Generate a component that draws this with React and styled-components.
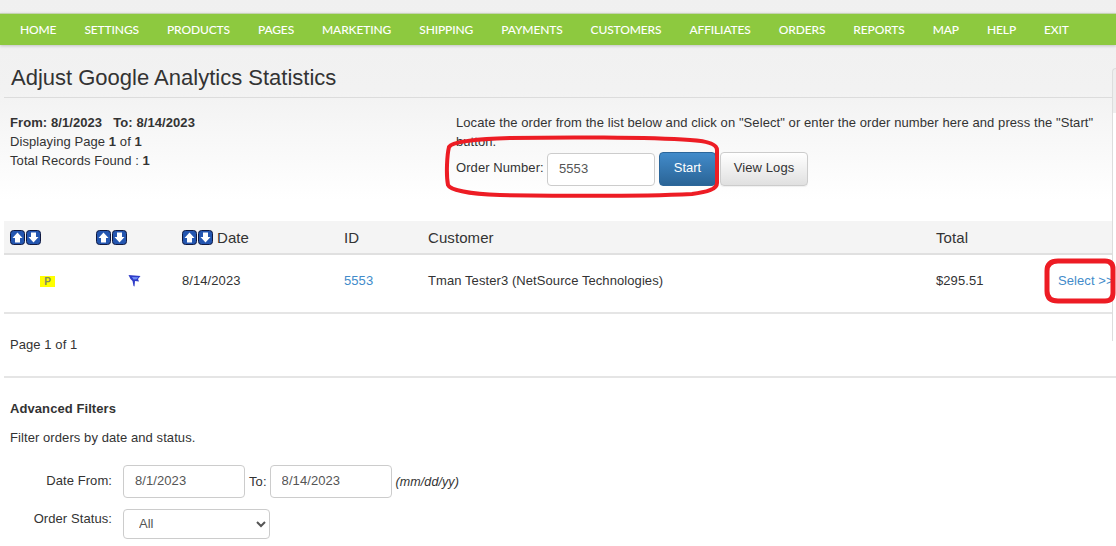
import React from "react";
import styled, { createGlobalStyle } from "styled-components";

const Global = createGlobalStyle`
  html, body { margin: 0; padding: 0; background: #fff; overflow: hidden; }
  body { font-family: "Liberation Sans", Arial, sans-serif; font-size: 13px; letter-spacing: 0.08px; color: #333; }
`;

const Page = styled.div`
  position: relative;
  width: 1116px;
  height: 546px;
  overflow: hidden;
  padding-top: 13px;
  box-sizing: border-box;
  background: linear-gradient(#f0f0f0 0, #f2f2f2 90px, #ffffff 200px);
`;

const Nav = styled.nav`
  display: flex;
  height: 32px;
  box-sizing: border-box;
  align-items: center;
  padding-left: 6px;
  background: #8dc93f;
  border-top: 1px solid #c5d3b2;
  box-shadow: 0 1px 3px rgba(0, 0, 0, 0.2);
`;

const NavItem = styled.a`
  padding: 0 14px;
  color: #fff;
  font-family: "Lato", sans-serif;
  font-size: 12px;
  letter-spacing: -0.13px;
  font-weight: 500;
  white-space: nowrap;
`;

const Title = styled.h1`
  margin: 20px 0 0 4px;
  padding: 0 0 6px 7px;
  font-size: 22px;
  line-height: 26px;
  font-weight: 400;
  letter-spacing: 0;
  color: #333;
  border-bottom: 1px solid #dcdcdc;
`;

const Summary = styled.section`
  display: flex;
  height: 123px;
  padding: 15px 0 0 10px;
  box-sizing: border-box;
`;

const Stats = styled.div`
  width: 446px;
  line-height: 19px;
`;

const Strong = styled.b`
  font-weight: 700;
`;

const Locate = styled.div`
  width: 640px;
  line-height: 19px;
`;

const OrderRow = styled.div`
  display: flex;
  align-items: center;
  gap: 4px;
  margin-top: 1px;
`;

const FieldLabel = styled.label`
  width: 88px;
  margin: 0 -1px 3px 0;
  white-space: nowrap;
`;

const TextInput = styled.input`
  width: ${(p) => p.$w}px;
  height: ${(p) => p.$h}px;
  box-sizing: border-box;
  padding: 0 11px 2px;
  font: 13px "Liberation Sans", Arial, sans-serif;
  letter-spacing: 0.08px;
  color: #555;
  background: #fff;
  border: 1px solid #ccc;
  border-radius: 4px;
  outline: none;
`;

const PrimaryButton = styled.button`
  width: 57px;
  height: 34px;
  padding: 0 0 3px;
  font: 13px "Liberation Sans", Arial, sans-serif;
  color: #fff;
  background: linear-gradient(#428bca, #2a6496);
  border: 1px solid #2b669a;
  border-radius: 4px;
`;

const DefaultButton = styled.button`
  width: 88px;
  height: 34px;
  padding: 0 0 3px;
  font: 13px "Liberation Sans", Arial, sans-serif;
  letter-spacing: 0.1px;
  color: #333;
  background: linear-gradient(#fff, #e0e0e0);
  border: 1px solid #ccc;
  border-radius: 4px;
  box-shadow: 0 1px 1px rgba(0, 0, 0, 0.06);
`;

const Columns = `86px 86px 162px 84px 508px 122px 1fr`;

const HeadRow = styled.div`
  display: grid;
  grid-template-columns: ${Columns};
  align-items: center;
  height: 34px;
  margin-left: 4px;
  padding-left: 6px;
  box-sizing: border-box;
  background: #f4f4f4;
  border-bottom: 2px solid #e0e0e0;
  font-size: 15px;
`;

const HeadCell = styled.div`
  display: flex;
  align-items: center;
  gap: ${(p) => p.$gap ?? 4}px;
`;

const BodyRow = styled.div`
  display: grid;
  grid-template-columns: ${Columns};
  align-items: center;
  height: 59px;
  margin-left: 4px;
  padding: 0 0 6px 6px;
  box-sizing: border-box;
  border-bottom: 2px solid #e5e5e5;
`;

const Badge = styled.span`
  display: block;
  width: 15px;
  height: 11px;
  margin: 2px 0 0 30px;
  background: #ffff00;
  color: #7f8a60;
  font: 700 10px/11px "Liberation Sans", sans-serif;
  text-align: center;
`;

const FlagBox = styled.span`
  display: block;
  margin-left: 32px;
  height: 13px;
  line-height: 0;
`;

const Link = styled.a`
  color: #428bca;
  white-space: nowrap;
`;

const Pager = styled.div`
  height: 64px;
  margin-left: 4px;
  padding: 23px 0 0 6px;
  box-sizing: border-box;
  border-bottom: 2px solid #e5e5e5;
  line-height: 16px;
`;

const Filters = styled.section`
  padding: 23px 0 0 10px;
`;

const FilterTitle = styled.h3`
  margin: 0;
  font-size: 13px;
  line-height: 16px;
  font-weight: 700;
`;

const FilterHint = styled.p`
  margin: 13px 0 19px;
  line-height: 16px;
`;

const FormRow = styled.div`
  display: flex;
  align-items: ${(p) => p.$align || "center"};
  gap: 4px;
  margin-bottom: 11px;
`;

const RowLabel = styled.label`
  width: 102px;
  margin: 0 7px ${(p) => (p.$top ? 0 : 2)}px 0;
  text-align: right;
  line-height: 16px;
  padding-top: ${(p) => p.$top || 0}px;
`;

const ToLabel = styled.span`
  margin-right: -1px;
`;

const Hint = styled.i`
  font-size: 12.5px;
`;

const Select = styled.select`
  width: 147px;
  height: 30px;
  padding: 0 11px 2px;
  font: 13px "Liberation Sans", Arial, sans-serif;
  color: #555;
  background: #fff;
  border: 1px solid #ccc;
  border-radius: 4px;
  outline: none;
`;

const Sliver = styled.div`
  position: absolute;
  right: 0;
  top: 68px;
  width: 3px;
  height: 272px;
  background: linear-gradient(#eeeeee 44px, #ffffff 44px);
  border-left: 1px solid #dddddd;
  border-top: 1px solid #dddddd;
  border-top-left-radius: 4px;
`;

const Marks = styled.svg`
  position: absolute;
  inset: 0;
  pointer-events: none;
`;

const Sort = ({ down }) => (
  <svg width="15" height="15" viewBox="0 0 15 15">
    <rect x="0.5" y="0.5" width="14" height="14" rx="3" fill="#2456b0" stroke="#111a40" />
    <path
      d={down ? "M5 2.5h5v4.5h2.5L7.5 12.5 2.5 7H5z" : "M5 12.5h5V8h2.5L7.5 2.5 2.5 8H5z"}
      fill="#fff"
    />
  </svg>
);

const SortPair = () => (
  <HeadCell $gap={1}>
    <Sort />
    <Sort down />
  </HeadCell>
);

const Flag = () => (
  <svg width="13" height="13" viewBox="0 0 13 13">
    <path d="M0.5 1 12.5 2 10 5 11 7.5 7 7 6.5 12.5 5.5 12 4.5 7Q2 5 0.5 1z" fill="#2f3cc8" />
    <path d="M4 3 10.5 3.2 8.5 5.2 5.5 5.5z" fill="#6f8ef5" />
  </svg>
);

const items = ["HOME","SETTINGS","PRODUCTS","PAGES","MARKETING","SHIPPING","PAYMENTS","CUSTOMERS","AFFILIATES","ORDERS","REPORTS","MAP","HELP","EXIT"];

export default function App() {
  return (
    <Page>
      <Global />
      <Nav>
        {items.map((i) => (
          <NavItem key={i}>{i}</NavItem>
        ))}
      </Nav>
      <Title>Adjust Google Analytics Statistics</Title>
      <Summary>
        <Stats>
          <Strong>From: 8/1/2023 &nbsp; To: 8/14/2023</Strong>
          <br />
          Displaying Page <Strong>1</Strong> of <Strong>1</Strong>
          <br />
          Total Records Found : <Strong>1</Strong>
        </Stats>
        <Locate>
          Locate the order from the list below and click on "Select" or enter the order number here and press the "Start" button.
          <OrderRow>
            <FieldLabel>Order Number:</FieldLabel>
            <TextInput $w={108} $h={33} defaultValue="5553" />
            <PrimaryButton>Start</PrimaryButton>
            <DefaultButton>View Logs</DefaultButton>
          </OrderRow>
        </Locate>
      </Summary>
      <HeadRow>
        <SortPair />
        <SortPair />
        <HeadCell>
          <SortPair />
          Date
        </HeadCell>
        <HeadCell>ID</HeadCell>
        <HeadCell>Customer</HeadCell>
        <HeadCell>Total</HeadCell>
        <HeadCell />
      </HeadRow>
      <BodyRow>
        <Badge>P</Badge>
        <FlagBox>
          <Flag />
        </FlagBox>
        <div>8/14/2023</div>
        <Link>5553</Link>
        <div>Tman Tester3 (NetSource Technologies)</div>
        <div>$295.51</div>
        <Link>Select &gt;&gt;</Link>
      </BodyRow>
      <Pager>Page 1 of 1</Pager>
      <Filters>
        <FilterTitle>Advanced Filters</FilterTitle>
        <FilterHint>Filter orders by date and status.</FilterHint>
        <FormRow>
          <RowLabel>Date From:</RowLabel>
          <TextInput $w={122} $h={33} defaultValue="8/1/2023" />
          <ToLabel>To:</ToLabel>
          <TextInput $w={122} $h={33} defaultValue="8/14/2023" />
          <Hint>(mm/dd/yy)</Hint>
        </FormRow>
        <FormRow $align="flex-start">
          <RowLabel $top={2}>Order Status:</RowLabel>
          <Select defaultValue="All">
            <option>All</option>
          </Select>
        </FormRow>
      </Filters>
      <Sliver />
      <Marks width="1116" height="546" viewBox="0 0 1116 546" fill="none" stroke="#ed1c24">
        <path strokeWidth="4" d="M449 147 C452 141 480 139 510 138 C560 137 650 137 690 140 C708 141 717 144 717 150 L717 183 C717 189 708 192 692 194 C650 196 560 196 500 195 C470 194 450 190 448 185 C446 175 447 155 449 147Z" />
        <path strokeWidth="5" d="M1058 261 H1105 Q1113 261 1113 269 V293 Q1113 301 1105 301 H1058 Q1047 301 1047 291 V271 Q1047 261 1058 261Z" />
      </Marks>
    </Page>
  );
}
